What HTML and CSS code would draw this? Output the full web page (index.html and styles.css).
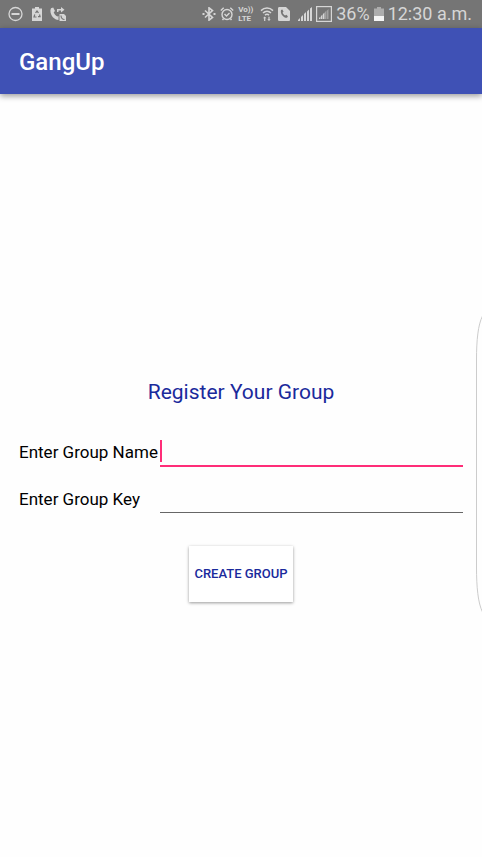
FILE: index.html
```html
<!DOCTYPE html>
<html lang="en">
<head>
<meta charset="utf-8">
<meta name="viewport" content="width=device-width, initial-scale=1">
<title>GangUp</title>
<link rel="stylesheet" href="styles.css">
</head>
<body>
<div class="status-bar">
  <div class="status-group notices">
    <svg width="16" height="16" viewBox="0 0 16 16" fill="none" stroke="currentColor"><circle cx="7.500" cy="8" r="6.500" stroke-width="1.300"/><path d="M3.500 8h8" stroke-width="2"/></svg>
    <svg width="10" height="14" viewBox="0 0 10 14"><path d="M0 1.500h3V0h4v1.500h3V14H0z" fill="currentColor"/><path d="M3.500 5.800 5 4l1.500 1.800M7.500 7.500l.6 2.200H6M4.500 10H2l.8-2.500" fill="none" stroke="#757575" stroke-width="1.200"/></svg>
    <svg width="17" height="14" viewBox="0 0 17 14"><path d="M1 1.200 3.200.5 5 4 3.700 5.300c.6 1.900 1.900 3.400 3.700 4.300L8.500 9v4C4.500 13 .2 8.500.4 3.200z" fill="currentColor"/><path d="M7 5V2h4V0l3.500 2.700L11 5.400V3.500H8.500V5z" fill="currentColor"/><path d="M9.500 7H14l2 2v5H9.500z" fill="currentColor"/><path d="M11 8.500c0 2 1.500 4 3.500 4" fill="none" stroke="#757575" stroke-width="1.200"/></svg>
  </div>
  <div class="status-group system">
    <svg width="14" height="14" viewBox="0 0 14 14" fill="none" stroke="currentColor" stroke-width="1.600"><path d="m3 3.500 7.500 7L7 13.200V.8l3.500 2.700L3 10.500"/><path d="M.5 7h2M11.500 7h2" stroke-width="2"/></svg>
    <svg width="14" height="14" viewBox="0 0 14 14" fill="none" stroke="currentColor" stroke-width="1.400"><circle cx="7" cy="7.500" r="5"/><path d="M.8 3.500 3.700.8M13.200 3.500 10.300.8M2.500 13l1-1.300M11.500 13l-1-1.300M4.500 7l2 2L9.500 6"/></svg>
    <span class="volte"><span>Vo))</span><span>LTE</span></span>
    <svg class="wifi" width="14" height="14" viewBox="0 0 14 14" fill="none" stroke="currentColor" stroke-width="1.500"><path d="M1 3.600C4.500.2 9.500.2 13 3.600M3 6c2.300-2.200 5.700-2.200 8 0M5 8.100c1.200-1.100 2.800-1.100 4 0"/><path d="M3 11.200 4.700 9.500l1.700 1.700H5.300V14H4.100v-2.800zM7.300 12.300H8.400V9.800h1.200v2.500h1.100L9 14z" fill="currentColor" stroke="none"/></svg>
    <svg width="12" height="14" viewBox="0 0 12 14"><path d="M1.500 0H8l4 4v8.500c0 1-.5 1.500-1.500 1.500h-9C.5 14 0 13.500 0 12.500v-11C0 .5.500 0 1.500 0z" fill="currentColor"/><path d="m3 3 1.300-.4 1.200 2-.9 1.100c.5 1.200 1.300 2.200 2.500 2.800l1.200-.8 1.600 1.600-.8 1.500C5.500 11 2 7 3 3z" fill="#757575"/></svg>
    <svg class="signal" width="14" height="14" viewBox="0 0 14 14" fill="currentColor"><path d="M0 14v-1l2-2v3zM3 14v-4l2-2v6zM6 14V7l2-2v9zM9 14V4.500l2-2V14zM12 14V1.500L14 0v14z"/></svg>
    <svg width="16" height="16" viewBox="0 0 16 16" fill="currentColor"><rect x=".6" y=".6" width="14.800" height="14.800" fill="none" stroke="currentColor" stroke-width="1.200"/><path d="M3 13v-1l1.500-1.500V13zM5 13v-3l1.500-1.500V13zM7 13V8l1.500-1.500V13z"/><path d="M9 13V6l1.500-1.500V13zM11 13V4.500L12.500 3v10z" opacity=".45"/></svg>
    <span class="percent">36%</span>
    <svg width="10" height="14" viewBox="0 0 10 14"><path d="M0 1.500h3V0h4v1.500h3V9H0z" fill="#adadad"/><path d="M0 9h10v5H0z" fill="#f5f5f5"/></svg>
    <time class="clock">12:30 a.m.</time>
  </div>
</div>
<header class="app-bar"><h1>GangUp</h1></header>
<main class="screen">
  <form class="register">
    <h2>Register Your Group</h2>
    <div class="fields">
      <label for="group-name">Enter Group Name</label>
      <div class="field active"><input id="group-name" type="text" autocomplete="off"></div>
      <label for="group-key">Enter Group Key</label>
      <div class="field"><input id="group-key" type="text" autocomplete="off"></div>
    </div>
    <button type="button">CREATE GROUP</button>
  </form>
</main>
<svg class="edge-handle" width="6" height="300" viewBox="0 0 6 300" fill="none" stroke="#cccccc"><path d="M6.500 2C2 11 .5 26 .5 46v207c0 20 1.500 36 6 45"/></svg>
</body>
</html>
```
FILE: styles.css
```css
* {
  box-sizing: border-box;
}

body {
  margin: 0;
  min-height: 100vh;
  display: flex;
  flex-direction: column;
  background: #fefefe;
  color: #000;
  font-family: Roboto, "Liberation Sans", sans-serif;
}

h1,
h2 {
  margin: 0;
}

.status-bar {
  height: 28px;
  padding: 0 10px 0 8px;
  display: flex;
  align-items: center;
  justify-content: space-between;
  background: #757575;
  color: #d6d6d6;
}

.status-group {
  display: flex;
  align-items: center;
}

.notices {
  gap: 8px;
}

.system {
  gap: 4px;
}

.volte {
  display: flex;
  flex-direction: column;
  width: 15px;
  font-size: 8px;
  line-height: 9px;
  font-weight: 700;
}

.wifi {
  margin-left: 3px;
}

.signal {
  margin-left: 4px;
}

.percent,
.clock {
  font-size: 18px;
  line-height: 28px;
}

.app-bar {
  height: 66px;
  padding: 2px 19px 0;
  display: flex;
  align-items: center;
  background: #3f51b5;
  box-shadow: 0 2px 6px rgba(0, 0, 0, 0.4);
}

.app-bar h1 {
  color: #fff;
  font-size: 24px;
  line-height: 32px;
  font-weight: 500;
}

.screen {
  flex: 1;
  display: flex;
  flex-direction: column;
  justify-content: center;
  padding: 28px 19px 0;
}

.register {
  display: flex;
  flex-direction: column;
  align-items: center;
  gap: 23px;
}

.register h2 {
  color: #1a2a9c;
  font-size: 21px;
  line-height: 28px;
  font-weight: 400;
}

.fields {
  width: 100%;
  display: grid;
  grid-template-columns: auto 1fr;
  column-gap: 2px;
}

.fields label {
  font-size: 17px;
  line-height: 47px;
}

.field {
  position: relative;
  height: 37px;
  border-bottom: 1px solid #666;
}

.field input {
  display: block;
  width: 100%;
  height: 36px;
  padding: 0 4px;
  border: 0;
  outline: 0;
  background: transparent;
  color: inherit;
  font: inherit;
  font-size: 17px;
}

.field.active {
  height: 38px;
  border-bottom: 2px solid #ff2d78;
}

.field.active::before {
  content: "";
  position: absolute;
  left: 0;
  top: 11px;
  width: 2px;
  height: 22px;
  background: #ff2d78;
}

.register button {
  height: 56px;
  padding: 0 5px;
  border: 0;
  background: #fff;
  color: #1a2a9c;
  font-family: inherit;
  font-size: 13px;
  font-weight: 500;
  box-shadow: 0 1px 3px rgba(0, 0, 0, 0.4);
}

.edge-handle {
  position: absolute;
  right: 0;
  top: 314px;
}
```
